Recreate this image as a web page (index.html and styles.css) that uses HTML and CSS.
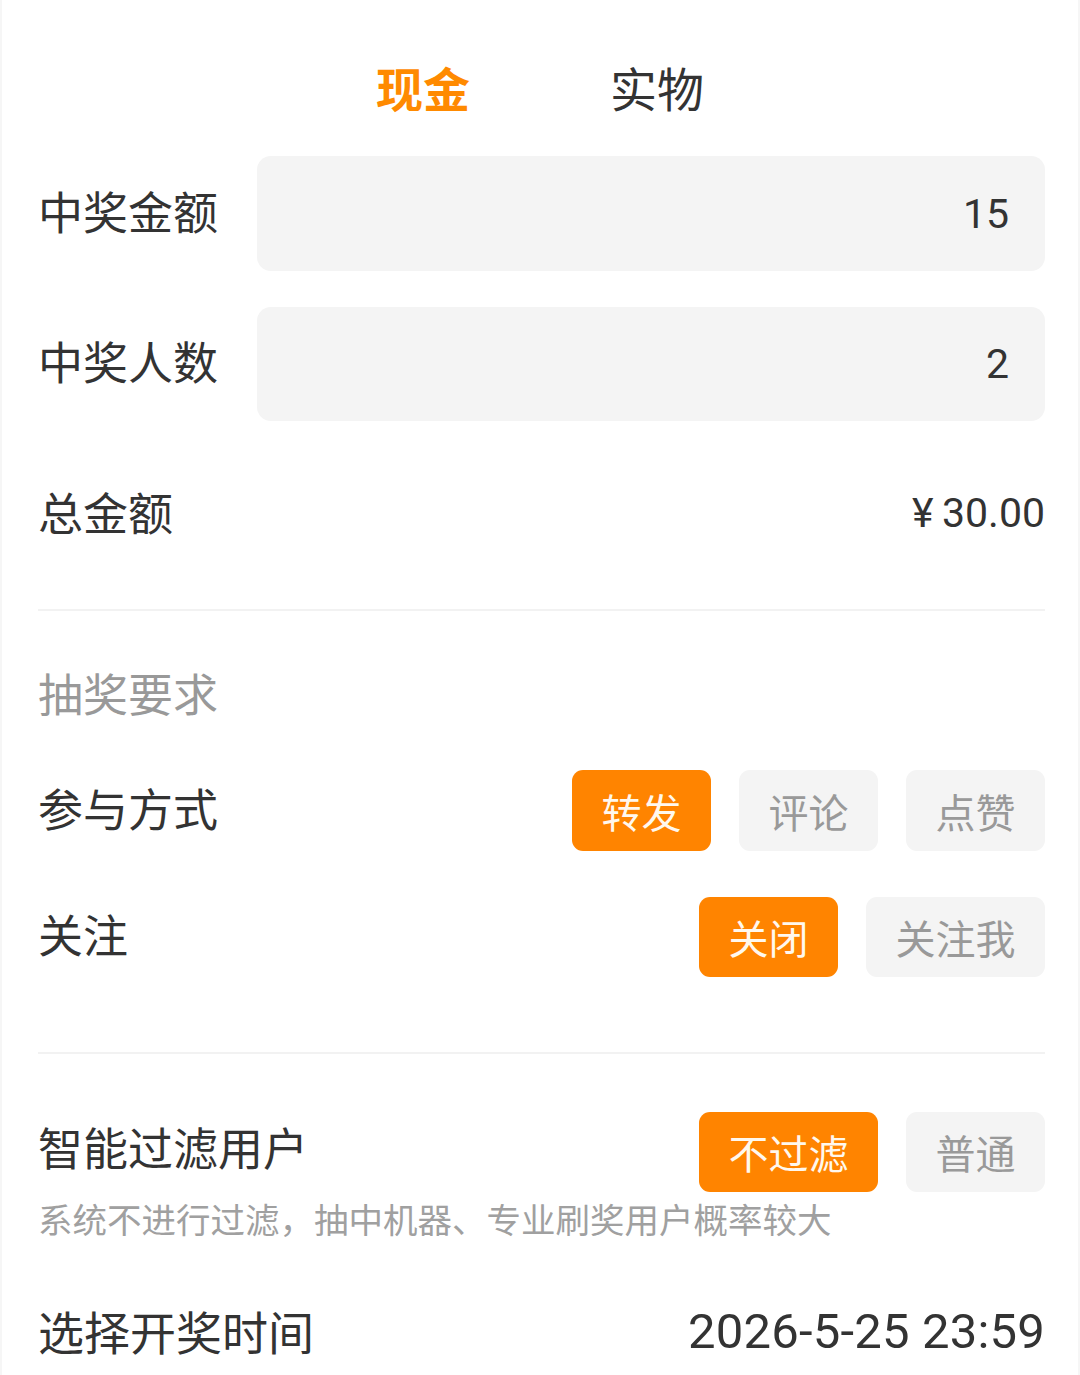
FILE: index.html
```html
<!DOCTYPE html>
<html lang="zh-CN">
<head>
<meta charset="utf-8">
<title>抽奖设置</title>
<link rel="stylesheet" href="styles.css">
</head>
<body>
<div class="page">
  <div class="tabs">
    <span class="tab active">现金</span>
    <span class="tab">实物</span>
  </div>

  <div class="field">
    <span class="label">中奖金额</span>
    <div class="input"><span class="num">15</span></div>
  </div>
  <div class="field field-gap">
    <span class="label">中奖人数</span>
    <div class="input"><span class="num">2</span></div>
  </div>

  <div class="row total">
    <span class="label">总金额</span>
    <span class="num money">¥&#8201;30.00</span>
  </div>

  <div class="divider"></div>

  <div class="section-title">抽奖要求</div>

  <div class="row opts join">
    <span class="label">参与方式</span>
    <div class="btns">
      <span class="btn on">转发</span>
      <span class="btn">评论</span>
      <span class="btn">点赞</span>
    </div>
  </div>

  <div class="row opts follow">
    <span class="label">关注</span>
    <div class="btns">
      <span class="btn on">关闭</span>
      <span class="btn">关注我</span>
    </div>
  </div>

  <div class="divider second"></div>

  <div class="row opts filter">
    <span class="label">智能过滤用户</span>
    <div class="btns">
      <span class="btn on">不过滤</span>
      <span class="btn">普通</span>
    </div>
  </div>
  <div class="desc">系统不进行过滤，抽中机器、专业刷奖用户概率较大</div>

  <div class="row date">
    <span class="label">选择开奖时间</span>
    <span class="num datetime">2026-5-25 23:59</span>
  </div>
</div>
</body>
</html>
```

FILE: styles.css
```css
html, body {
  margin: 0;
  padding: 0;
  background: #ffffff;
}

body {
  font-family: "Noto Sans CJK SC", "Noto Sans", sans-serif;
  color: #333333;
}

.page {
  width: 1080px;
  height: 1375px;
  box-sizing: border-box;
  padding: 0 33px 0 36px;
  border-left: 2px solid #f6f6f6;
  border-right: 2px solid #f6f6f6;
  overflow: hidden;
}

.tabs {
  height: 132px;
  padding-top: 21px;
  padding-bottom: 3px;
  display: flex;
  justify-content: center;
  align-items: center;
  gap: 140px;
  box-sizing: content-box;
  margin-left: -38px;
  margin-right: -35px;
  padding-left: 0;
}

.tab {
  font-size: 47px;
  line-height: 60px;
  color: #333333;
}

.tab.active {
  color: #ff8a00;
  font-weight: 700;
}

.label {
  font-size: 45px;
  line-height: 60px;
  color: #333333;
  white-space: nowrap;
  margin-bottom: 6px;
}

.num {
  font-family: Roboto, "Noto Sans", sans-serif;
  color: #333333;
}

.field {
  display: flex;
  align-items: center;
  height: 115px;
}

.field-gap {
  margin-top: 36px;
  height: 114px;
}

.field .label {
  width: 219px;
  flex: none;
}

.input {
  flex: 1;
  height: 100%;
  background: #f4f4f4;
  border-radius: 14px;
  display: flex;
  align-items: center;
  justify-content: flex-end;
  padding-right: 36px;
}

.input .num {
  font-size: 41px;
}

.row {
  display: flex;
  align-items: center;
  justify-content: space-between;
}

.total {
  height: 188px;
}

.money {
  font-size: 41px;
  margin-bottom: 4px;
}

.divider {
  height: 2px;
  background: #f2f2f2;
}

.section-title {
  padding-top: 57px;
  height: 109px;
  box-sizing: border-box;
  font-size: 45px;
  line-height: 50px;
  color: #999999;
}

.opts {
  height: 81px;
}

.join {
  margin-top: 50px;
}

.follow {
  margin-top: 46px;
  height: 80px;
}

.btns {
  display: flex;
  gap: 28px;
}

.btn {
  height: 81px;
  box-sizing: border-box;
  padding: 0 29.5px;
  display: flex;
  align-items: center;
  font-size: 40px;
  color: #999999;
  background: #f4f4f4;
  border-radius: 11px;
}

.follow .btn {
  height: 80px;
}

.btn.on {
  background: #ff8400;
  color: #fff8ee;
}

.divider.second {
  margin-top: 75px;
}

.filter {
  margin-top: 58px;
  height: 80px;
}

.filter .btn {
  height: 80px;
}

.filter .label {
  margin-bottom: 10px;
}

.desc {
  margin-top: 6px;
  font-size: 34.5px;
  line-height: 40px;
  color: #a0a0a0;
  white-space: nowrap;
}

.date {
  margin-top: 60px;
  height: 70px;
}

.date .label {
  font-size: 46px;
}

.datetime {
  font-size: 49px;
  letter-spacing: 0.2px;
  margin-bottom: 4px;
}
```
